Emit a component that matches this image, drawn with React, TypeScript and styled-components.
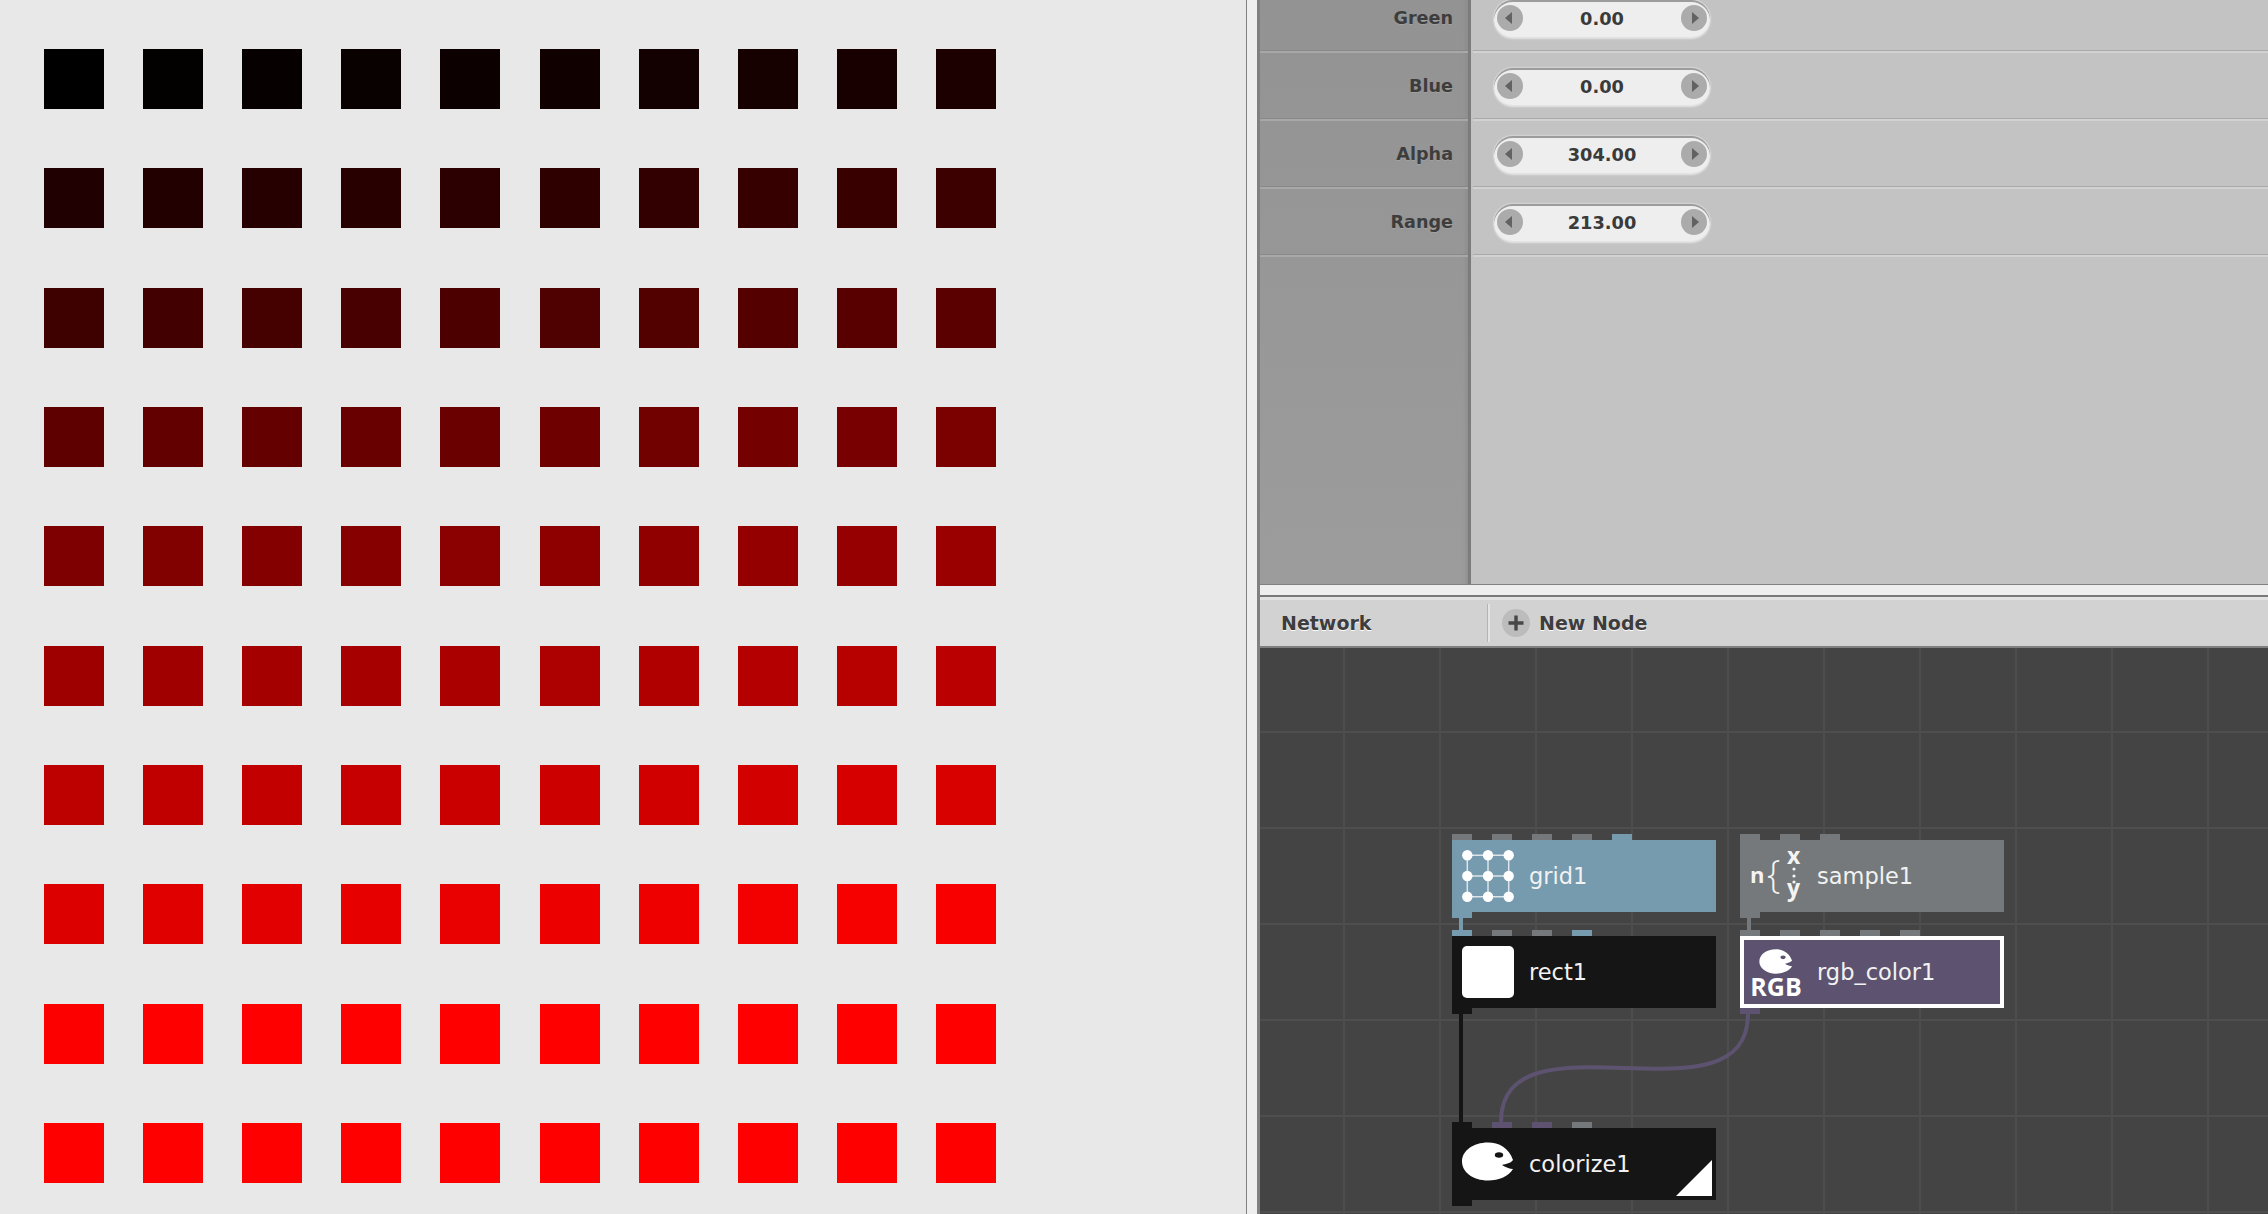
import { FC, ReactNode } from 'react';
import styled, { createGlobalStyle } from 'styled-components';

const UI_FONT = '"DejaVu Sans", "Liberation Sans", sans-serif';

const GlobalStyle = createGlobalStyle`
  html, body {
    margin: 0;
    height: 100%;
    overflow: hidden;
    background: #e8e8e8;
  }

  #root {
    height: 100%;
  }
`;

const Window = styled.div`
  display: flex;
  width: 2268px;
  height: 1214px;
  font-family: ${UI_FONT};
`;

const Viewer = styled.div`
  flex: 0 0 1246px;
  box-sizing: border-box;
  padding: 49px 0 0 44px;
  background: #e8e8e8;
  display: grid;
  grid-template-columns: repeat(10, 60px);
  grid-auto-rows: 60px;
  column-gap: 39.11px;
  row-gap: 59.33px;
  align-content: start;
`;

const Swatch = styled.div`
  width: 60px;
  height: 60px;
`;

const VerticalSplitter = styled.div`
  flex: 0 0 14px;
  box-sizing: border-box;
  background: #eeeeee;
  border-left: 1px solid #808080;
  border-right: 3px solid #808080;
`;

const RightColumn = styled.div`
  flex: 1;
  min-width: 0;
  display: flex;
  flex-direction: column;
`;

const ParameterPanel = styled.div`
  flex: 0 0 584px;
  display: flex;
  overflow: hidden;
`;

const LabelColumn = styled.div`
  flex: 0 0 208px;
  background: linear-gradient(to bottom, #939393, #9c9c9c);
  border-right: 3px solid #7c7c7c;
  box-shadow: inset -6px 0 5px -5px #8a8a8a;
`;

const ValueColumn = styled.div`
  flex: 1;
  padding-left: 2px;
  background: #c3c3c3;
`;

const ScrolledRows = styled.div`
  margin-top: -15px;
`;

const LabelCell = styled.div`
  height: 68px;
  box-sizing: border-box;
  display: flex;
  align-items: center;
  justify-content: flex-end;
  padding: 0 15px 0 0;
  border-bottom: 2px solid #a8a8a8;
  box-shadow: inset 0 -1px 0 #888888;
  font-size: 17.6px;
  font-weight: 700;
  color: #3d3d3d;
  text-shadow: 0 1px 0 rgba(255, 255, 255, 0.12);
`;

const ValueCell = styled.div`
  height: 68px;
  box-sizing: border-box;
  display: flex;
  align-items: center;
  padding: 0 0 0 21px;
  border-bottom: 2px solid #d2d2d2;
  box-shadow: inset 0 -1px 0 #aaaaaa;
`;

const Stepper = styled.div`
  width: 216px;
  height: 37px;
  box-sizing: border-box;
  display: flex;
  align-items: center;
  justify-content: space-between;
  padding: 0 3px;
  border-radius: 19px;
  background: #eeeeee;
  box-shadow: inset 0 2px 0 #9c9c9c, 0 2px 2px #e4e4e4, 0 0 2px #ffffff;
`;

const StepperValue = styled.span`
  font-size: 17.8px;
  font-weight: 700;
  color: #3a3a3a;
`;

const StepperButton = styled.div<{ $direction: 'left' | 'right' }>`
  width: 26px;
  height: 26px;
  border-radius: 50%;
  background: #ababab;
  display: flex;
  align-items: center;
  justify-content: center;

  &::before {
    content: '';
    width: 0;
    height: 0;
    border-top: 6px solid transparent;
    border-bottom: 6px solid transparent;
    ${({ $direction }) =>
      $direction === 'left'
        ? 'border-right: 7px solid #626262; margin-right: 3px;'
        : 'border-left: 7px solid #626262; margin-left: 3px;'}
  }
`;

const HorizontalSplitter = styled.div`
  flex: 0 0 13px;
  box-sizing: border-box;
  background: #eeeeee;
  border-top: 1px solid #808080;
  border-bottom: 2px solid #787878;
`;

const NetworkToolbar = styled.div`
  flex: 0 0 51px;
  box-sizing: border-box;
  display: flex;
  align-items: center;
  background: #d2d2d2;
  border-top: 3px solid #e2e2e2;
  border-bottom: 2px solid #808080;
  font-size: 19px;
  font-weight: 700;
  color: #3d3d3d;
  text-shadow: 0 1px 0 #ffffff;
`;

const ToolbarTitle = styled.div`
  flex: 0 0 227px;
  box-sizing: border-box;
  padding-left: 21px;
  align-self: stretch;
  display: flex;
  align-items: center;
`;

const ToolbarDivider = styled.div`
  width: 3px;
  height: 38px;
  background: #e4e4e4;
  box-shadow: inset 1px 0 0 #b4b4b4;
`;

const NewNodeButton = styled.div`
  display: flex;
  align-items: center;
  gap: 9px;
  margin-left: 12px;
`;

const PlusIcon = styled.svg`
  display: block;
  width: 28px;
  height: 28px;
`;

const NetworkCanvas = styled.div`
  flex: 1;
  position: relative;
  overflow: hidden;
  background-color: #444444;
  background-image: linear-gradient(to right, #4e4e4e 2px, transparent 2px),
    linear-gradient(to bottom, #4e4e4e 2px, transparent 2px);
  background-size: 96px 96px;
  background-position: 83px 83px;
`;

const ConnectionLayer = styled.svg`
  position: absolute;
  inset: 0;
  width: 100%;
  height: 100%;
`;

const NodeBox = styled.div<{ $x: number; $y: number }>`
  position: absolute;
  left: ${({ $x }) => $x}px;
  top: ${({ $y }) => $y}px;
  width: 264px;
`;

const PortRow = styled.div`
  display: flex;
  gap: 20px;
  height: 6px;
`;

const Port = styled.div<{ $color: string }>`
  width: 20px;
  height: 6px;
  background: ${({ $color }) => $color};
`;

const NodeBody = styled.div<{ $color: string; $selected?: boolean }>`
  position: relative;
  height: 72px;
  box-sizing: border-box;
  display: flex;
  align-items: center;
  gap: 15px;
  padding-left: 10px;
  background: ${({ $color }) => $color};
  box-shadow: ${({ $selected }) =>
    $selected ? 'inset 0 0 0 4px #ffffff' : 'none'};
  color: #f2f2f2;
  font-size: 22.5px;
`;

const NodeIcon = styled.div`
  flex: 0 0 52px;
  height: 52px;
  display: flex;
  flex-direction: column;
  align-items: center;
`;

const IconDrawing = styled.svg`
  display: block;
  width: 52px;
  height: 52px;
  overflow: visible;
`;

const WhiteSquare = styled.div`
  width: 52px;
  height: 52px;
  border-radius: 5px;
  background: #ffffff;
`;

const SmallPalette = styled.svg`
  display: block;
  width: 38px;
  height: 25px;
  margin-top: 3px;
`;

const RgbLabel = styled.span`
  font-family: 'Open Sans', sans-serif;
  font-size: 25px;
  font-weight: 700;
  line-height: 24px;
  color: #ffffff;
`;

const RenderedFlag = styled.div`
  position: absolute;
  right: 4px;
  bottom: 4px;
  width: 36px;
  height: 36px;
  background: #ffffff;
  clip-path: polygon(100% 0, 100% 100%, 0 100%);
`;

const OutputPort = styled(Port)``;

const BLUE = '#769aae';
const GRAY = '#75797b';
const BLACK = '#151515';
const PURPLE = '#5d5370';

const PARAMETERS = [
  { label: 'Green', value: '0.00' },
  { label: 'Blue', value: '0.00' },
  { label: 'Alpha', value: '304.00' },
  { label: 'Range', value: '213.00' },
];

const PALETTE_PATH =
  'M51 22C47 10 37 4.5 26 4.5C11 4.5 0 13 0 23.5C0 34 11 42.5 26 42.5C37 42.5 47 38 51 31C48 31 43 29 40 27C44 26 49 25 51 22Z';

const GridIcon: FC = () => {
  const stops = [5.3, 26, 46.7];
  return (
    <IconDrawing viewBox="0 0 52 52">
      {stops.map((p) => (
        <g key={p} stroke="#dbe5ea" strokeWidth="1.5">
          <line x1={p} y1="5" x2={p} y2="47" />
          <line x1="5" y1={p} x2="47" y2={p} />
        </g>
      ))}
      {stops.map((y) =>
        stops.map((x) => (
          <circle key={`${x}-${y}`} cx={x} cy={y} r="5.2" fill="#ffffff" />
        ))
      )}
    </IconDrawing>
  );
};

const SampleIcon: FC = () => (
  <IconDrawing viewBox="0 0 52 52" fontFamily="'Open Sans', sans-serif" fill="#f4f4f4">
    <text x="0" y="33" fontSize="22" fontWeight="700">
      n
    </text>
    <text x="17" y="38" fontSize="38" fontWeight="300">
      {'{'}
    </text>
    <text x="37" y="14" fontSize="23" fontWeight="700">
      x
    </text>
    <circle cx="44" cy="19" r="1.6" />
    <circle cx="44" cy="26" r="1.6" />
    <circle cx="44" cy="32" r="1.6" />
    <text x="37" y="46" fontSize="23" fontWeight="700">
      y
    </text>
  </IconDrawing>
);

const PaletteIcon: FC = () => (
  <IconDrawing viewBox="0 0 52 52">
    <path d={PALETTE_PATH} fill="#ffffff" />
    <ellipse cx="37" cy="17" rx="4.2" ry="2.8" fill={BLACK} />
  </IconDrawing>
);

const RgbIcon: FC = () => (
  <>
    <SmallPalette viewBox="0 4 52 39">
      <path d={PALETTE_PATH} fill="#ffffff" />
      <ellipse cx="37" cy="17" rx="4.2" ry="2.8" fill={PURPLE} />
    </SmallPalette>
    <RgbLabel>RGB</RgbLabel>
  </>
);

type NodeProps = {
  x: number;
  y: number;
  name: string;
  color: string;
  ports: string[];
  selected?: boolean;
  children: ReactNode;
  flag?: boolean;
};

const Node: FC<NodeProps> = ({ x, y, name, color, ports, selected, children, flag }) => (
  <NodeBox $x={x} $y={y}>
    <PortRow>
      {ports.map((port, i) => (
        <Port key={i} $color={port} />
      ))}
    </PortRow>
    <NodeBody $color={color} $selected={selected}>
      <NodeIcon>{children}</NodeIcon>
      <span>{name}</span>
      {flag && <RenderedFlag />}
    </NodeBody>
    <OutputPort $color={color} />
  </NodeBox>
);

const swatchColor = (index: number) =>
  `rgb(${Math.min(255, Math.round(index * 3.15))}, 0, 0)`;

const App: FC = () => (
  <Window>
    <GlobalStyle />
    <Viewer>
      {Array.from({ length: 100 }, (_, i) => (
        <Swatch key={i} style={{ background: swatchColor(i) }} />
      ))}
    </Viewer>
    <VerticalSplitter />
    <RightColumn>
      <ParameterPanel>
        <LabelColumn>
          <ScrolledRows>
            {PARAMETERS.map(({ label }) => (
              <LabelCell key={label}>{label}</LabelCell>
            ))}
          </ScrolledRows>
        </LabelColumn>
        <ValueColumn>
          <ScrolledRows>
            {PARAMETERS.map(({ label, value }) => (
              <ValueCell key={label}>
                <Stepper>
                  <StepperButton $direction="left" />
                  <StepperValue>{value}</StepperValue>
                  <StepperButton $direction="right" />
                </Stepper>
              </ValueCell>
            ))}
          </ScrolledRows>
        </ValueColumn>
      </ParameterPanel>
      <HorizontalSplitter />
      <NetworkToolbar>
        <ToolbarTitle>Network</ToolbarTitle>
        <ToolbarDivider />
        <NewNodeButton>
          <PlusIcon viewBox="0 0 28 28">
            <circle cx="14" cy="14" r="14" fill="#bcbcbc" />
            <path d="M14 6.5v15M6.5 14h15" stroke="#474747" strokeWidth="3.4" />
          </PlusIcon>
          New Node
        </NewNodeButton>
      </NetworkToolbar>
      <NetworkCanvas>
        <ConnectionLayer>
          <line x1="201" y1="270" x2="201" y2="282" stroke={BLUE} strokeWidth="4" />
          <line x1="489" y1="270" x2="489" y2="282" stroke={GRAY} strokeWidth="4" />
          <line x1="201" y1="366" x2="201" y2="474" stroke={BLACK} strokeWidth="4" />
          <path
            d="M488 366C488 482 241 358 241 474"
            fill="none"
            stroke={PURPLE}
            strokeWidth="4"
          />
        </ConnectionLayer>
        <Node x={192} y={186} name="grid1" color={BLUE} ports={[GRAY, GRAY, GRAY, GRAY, BLUE]}>
          <GridIcon />
        </Node>
        <Node x={480} y={186} name="sample1" color={GRAY} ports={[GRAY, GRAY, GRAY]}>
          <SampleIcon />
        </Node>
        <Node x={192} y={282} name="rect1" color={BLACK} ports={[BLUE, GRAY, GRAY, BLUE]}>
          <WhiteSquare />
        </Node>
        <Node
          x={480}
          y={282}
          name="rgb_color1"
          color={PURPLE}
          ports={[GRAY, GRAY, GRAY, GRAY, GRAY]}
          selected
        >
          <RgbIcon />
        </Node>
        <Node
          x={192}
          y={474}
          name="colorize1"
          color={BLACK}
          ports={[BLACK, PURPLE, PURPLE, GRAY]}
          flag
        >
          <PaletteIcon />
        </Node>
      </NetworkCanvas>
    </RightColumn>
  </Window>
);

export default App;
